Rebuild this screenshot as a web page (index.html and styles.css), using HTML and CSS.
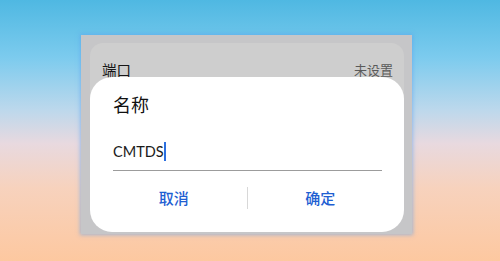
FILE: index.html
```html
<!DOCTYPE html>
<html lang="zh">
<head>
<meta charset="utf-8">
<link rel="stylesheet" href="styles.css">
</head>
<body>
<div class="stage">
  <div class="panel">
    <div class="card">
      <div class="row">
        <span class="label">端口</span>
        <span class="value">未设置</span>
      </div>
    </div>
    <div class="dialog">
      <div class="title">名称</div>
      <div class="field">
        <span class="input-text">CMTDS</span><span class="caret"></span>
      </div>
      <div class="actions">
        <button class="btn">取消</button>
        <span class="divider"></span>
        <button class="btn">确定</button>
      </div>
    </div>
  </div>
</div>
</body>
</html>
```
FILE: styles.css
```css
html, body {
  margin: 0;
  padding: 0;
  width: 500px;
  height: 261px;
  overflow: hidden;
}
body {
  font-family: "Noto Sans CJK SC", "Noto Sans", sans-serif;
  background: linear-gradient(180deg, #4fb8e2 0%, #7ccbee 22%, #bcd8ec 42%, #e8d9df 55%, #f7d2bd 72%, #fdc8a0 100%);
}
.stage {
  padding: 35px 0 0 81px;
}
.panel {
  position: relative;
  width: 331px;
  height: 199px;
  box-sizing: border-box;
  padding: 8px 8px 0 9px;
  background: #c6c6c8;
  box-shadow: 0 0 4px 1px rgba(90, 160, 240, 0.55);
}
.card {
  height: 60px;
  background: #cecece;
  border-radius: 13px 13px 0 0;
  padding: 0 11px 0 12px;
}
.row {
  display: flex;
  justify-content: space-between;
  align-items: center;
  padding-top: 16px;
  line-height: 22px;
}
.label {
  font-size: 14.5px;
  color: #161616;
}
.value {
  font-size: 13px;
  color: #5a5a5a;
}
.dialog {
  position: absolute;
  left: 9px;
  top: 42px;
  width: 314px;
  height: 155px;
  box-sizing: border-box;
  background: #fff;
  border-radius: 22px;
  padding: 14px 22px 0 23px;
}
.title {
  font-size: 18px;
  line-height: 26px;
  color: #111;
  font-weight: 400;
}
.field {
  margin-top: 25px;
  height: 29px;
  box-sizing: border-box;
  padding-bottom: 10px;
  border-bottom: 1px solid #9c9c9c;
  display: flex;
  align-items: center;
}
.input-text {
  font-family: "Lato", "Noto Sans", sans-serif;
  font-weight: 400;
  font-size: 14.5px;
  color: #1a1a1a;
}
.caret {
  width: 2px;
  height: 19px;
  background: #2b6fe0;
}
.actions {
  display: flex;
  align-items: center;
  margin: 15px -11px 0 -12px;
  height: 24px;
}
.btn {
  flex: 1;
  border: 0;
  background: none;
  padding: 0;
  font-family: "Noto Sans CJK SC", sans-serif;
  font-size: 15px;
  font-weight: 500;
  color: #1f5fd2;
  line-height: 24px;
}
.divider {
  width: 1px;
  height: 22px;
  background: #d8d8d8;
}
```
